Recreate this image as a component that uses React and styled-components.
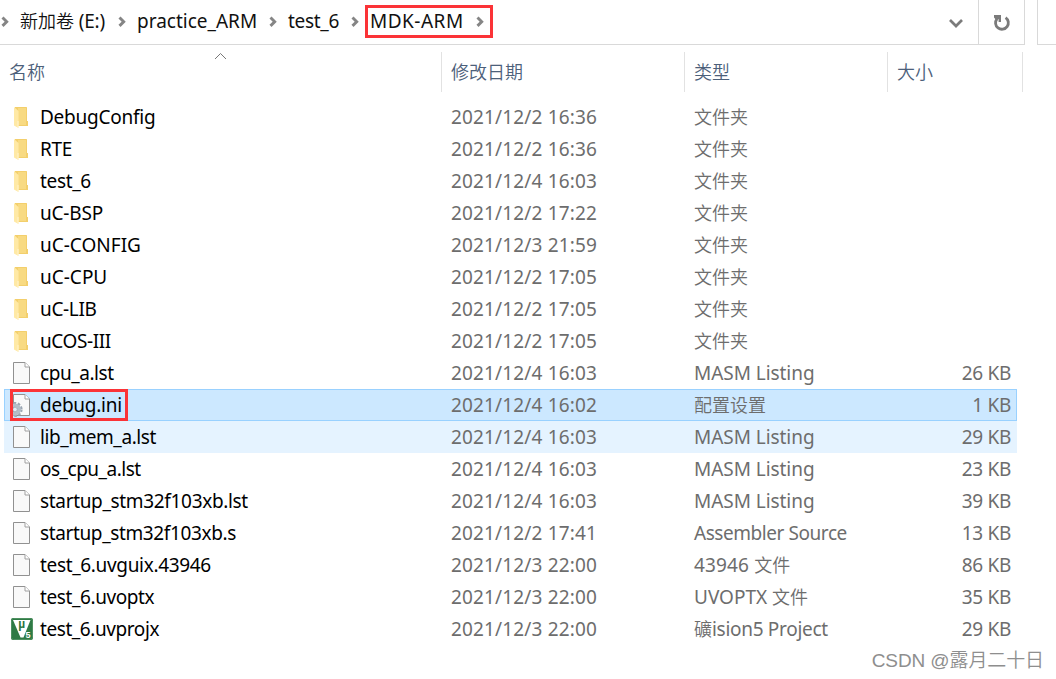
import styled, { createGlobalStyle } from "styled-components";

const GlobalStyle = createGlobalStyle`
  * {
    box-sizing: border-box;
  }
  body {
    margin: 0;
    background: #fff;
    font-family: "Noto Sans", "Noto Sans CJK SC", sans-serif;
    font-size: 19px;
    overflow: hidden;
  }
`;

const Window = styled.div`
  position: relative;
  width: 1056px;
  height: 679px;
  background: #fff;
  overflow: hidden;
`;

const AddressRow = styled.div`
  display: flex;
  justify-content: space-between;
  height: 45px;
`;

const AddressBar = styled.div`
  display: flex;
  width: 1025px;
  border-right: 1px solid #d9d9d9;
  border-bottom: 1px solid #d9d9d9;
`;

const SearchBox = styled.div`
  width: 19px;
  border-left: 1px solid #d9d9d9;
  border-bottom: 1px solid #d9d9d9;
`;

const Crumbs = styled.div`
  display: flex;
  flex: 1;
  height: 42px;
  align-items: center;
`;

const Crumb = styled.div`
  display: flex;
  align-items: center;
  height: 33px;
  flex: none;
  width: ${(props) => props.$width}px;
  padding-left: ${(props) => props.$pad}px;
  color: #111;
`;

const MarkedCrumb = styled(Crumb)`
  margin-left: 5px;
  padding-right: 5px;
  border: 3px solid #fb3337;
`;

const CrumbLabel = styled.span`
  flex: 1;
  line-height: 26px;
  white-space: nowrap;
`;

const Text = styled.span`
  white-space: pre;
  letter-spacing: ${(props) => props.$track || 0}px;
`;

const Cjk = styled.span`
  font-family: "Noto Sans CJK SC", sans-serif;
  font-size: 18px;
  font-weight: 350;
  line-height: 1;
  letter-spacing: 0;
`;

const DropButton = styled.div`
  display: flex;
  align-items: center;
  justify-content: center;
  width: 44px;
  height: 46px;
`;

const RefreshButton = styled(DropButton)`
  width: 46px;
  height: 44px;
  padding-top: 2px;
  border-left: 1px solid #d9d9d9;
`;

const Columns = styled.div`
  position: relative;
  display: flex;
  height: 40px;
  margin-top: 7px;
`;

const Column = styled.div`
  width: ${(props) => props.$width}px;
  padding-left: 9px;
  border-right: 1px solid #e2e2e2;
  line-height: 40px;
  color: #4c607a;
`;

const SortArrow = styled.svg`
  position: absolute;
  left: 214px;
  top: 0;
`;

const List = styled.div`
  margin: 9px 39px 0 4px;
`;

const Row = styled.div`
  display: flex;
  align-items: center;
  height: 32px;
  padding-left: 6px;
  color: #6d6d6d;
  background: ${(props) =>
    props.$state === "selected"
      ? "#cce8ff"
      : props.$state === "hover"
        ? "#e5f3ff"
        : "transparent"};
  box-shadow: ${(props) =>
    props.$state === "selected" ? "inset 0 0 0 1px #99d1ff, 0 1px 0 #99d1ff" : "none"};
`;

const NameCell = styled.div`
  display: flex;
  align-items: center;
  width: 441px;
  color: #000;
`;

const NameBox = styled.div`
  display: flex;
  align-items: center;
  height: 32px;
`;

const MarkedBox = styled(NameBox)`
  width: 118px;
  height: 32px;
  box-shadow: inset 0 0 0 3px #fb3337;
`;

const IconSlot = styled.div`
  display: flex;
  width: 30px;
  height: 24px;
  flex: none;
`;

const Label = styled.div`
  line-height: 30px;
  white-space: nowrap;
`;

const DateCell = styled(Label)`
  width: 243px;
`;

const TypeCell = styled(Label)`
  width: 217px;
`;

const SizeCell = styled(Label)`
  width: 100px;
  text-align: right;
`;

const Watermark = styled.div`
  position: absolute;
  right: 12px;
  bottom: 3px;
  color: #8e8e8e;
  font-size: 19px;
  line-height: 30px;
  letter-spacing: -0.1px;
  font-family: "Liberation Sans", "Noto Sans CJK SC", sans-serif;
  font-weight: 350;
  white-space: nowrap;
`;

const Chevron = () => (
  <svg width="10" height="14" viewBox="0 0 10 14">
    <path d="M2.5 3.5L6.7 7.7L2.5 11.9" fill="none" stroke="#858585" strokeWidth="2.9" />
  </svg>
);

const FolderIcon = () => (
  <svg width="24" height="24" viewBox="0 0 24 24">
    <path d="M5 2H16.5L17 2.5V16H18V21H5Z" fill="#f3cf6c" />
    <path d="M8 3H16V20H8Z" fill="#f8da82" />
    <path d="M4 2L8.5 6V23L4 20.5Z" fill="#ffe9a5" />
    <path d="M8.5 16V23L7.5 22.5V16Z" fill="#fff4ce" />
  </svg>
);

const PagePath = () => (
  <>
    <path d="M3.5 1.5H15L19.5 6V22.5H3.5Z" fill="#f9f9f9" stroke="#919191" />
    <path d="M15 1.5V6H19.5" fill="#fff" stroke="#a0a0a0" />
  </>
);

const FileIcon = () => (
  <svg width="24" height="24" viewBox="0 0 24 24">
    <PagePath />
  </svg>
);

const ConfigIcon = () => (
  <svg width="24" height="24" viewBox="0 0 24 24">
    <clipPath id="gear-area">
      <rect x="3" y="0" width="21" height="24" />
    </clipPath>
    <PagePath />
    <g clipPath="url(#gear-area)">
      <circle cx="5" cy="16.5" r="6.3" fill="none" stroke="#9ca7b3" strokeWidth="2.6" strokeDasharray="2.4 1.56" />
      <circle cx="5" cy="16.5" r="4.2" fill="none" stroke="#b4bec9" strokeWidth="3.6" />
      <circle cx="5" cy="16.5" r="2.3" fill="#e4edf6" stroke="#8d98a5" strokeWidth="0.7" />
    </g>
  </svg>
);

const KeilIcon = () => (
  <svg width="24" height="24" viewBox="0 0 24 24">
    <rect x="1" y="1" width="22" height="22" rx="2" fill="#2f7a45" />
    <rect x="1.5" y="1.5" width="21" height="21" rx="2" fill="none" stroke="#4f9161" />
    <path d="M3 3H20.5L13.5 20.5H10.5Z" fill="#fff" />
    <text x="8.2" y="11" fontSize="12" fontWeight="700" fontFamily="Liberation Sans" fill="#2b7541">
      µ
    </text>
    <text x="15.5" y="20.5" fontSize="9" fontWeight="700" fontFamily="Liberation Sans" fill="#fff">
      5
    </text>
  </svg>
);

const icons = {
  folder: FolderIcon,
  file: FileIcon,
  config: ConfigIcon,
  keil: KeilIcon,
};

const files = [
  { name: "DebugConfig", track: -0.25, date: "2021/12/2 16:36", type: "文件夹", icon: "folder" },
  { name: "RTE", track: -0.3, date: "2021/12/2 16:36", type: "文件夹", icon: "folder" },
  { name: "test_6", track: -0.35, date: "2021/12/4 16:03", type: "文件夹", icon: "folder" },
  { name: "uC-BSP", track: -0.2, date: "2021/12/2 17:22", type: "文件夹", icon: "folder" },
  { name: "uC-CONFIG", date: "2021/12/3 21:59", type: "文件夹", icon: "folder" },
  { name: "uC-CPU", date: "2021/12/2 17:05", type: "文件夹", icon: "folder" },
  { name: "uC-LIB", track: -0.35, date: "2021/12/2 17:05", type: "文件夹", icon: "folder" },
  { name: "uCOS-III", track: -0.4, date: "2021/12/2 17:05", type: "文件夹", icon: "folder" },
  { name: "cpu_a.lst", track: -0.45, date: "2021/12/4 16:03", type: "MASM Listing", typeTrack: -0.05, size: "26 KB", icon: "file" },
  { name: "debug.ini", track: -0.25, date: "2021/12/4 16:02", type: "配置设置", size: "1 KB", icon: "config", state: "selected" },
  { name: "lib_mem_a.lst", track: -0.4, date: "2021/12/4 16:03", type: "MASM Listing", typeTrack: -0.05, size: "29 KB", icon: "file", state: "hover" },
  { name: "os_cpu_a.lst", track: -0.5, date: "2021/12/4 16:03", type: "MASM Listing", typeTrack: -0.05, size: "23 KB", icon: "file" },
  { name: "startup_stm32f103xb.lst", track: -0.33, date: "2021/12/4 16:03", type: "MASM Listing", typeTrack: -0.05, size: "39 KB", icon: "file" },
  { name: "startup_stm32f103xb.s", track: -0.37, date: "2021/12/2 17:41", type: "Assembler Source", typeTrack: -0.44, size: "13 KB", icon: "file" },
  { name: "test_6.uvguix.43946", track: -0.33, date: "2021/12/3 22:00", type: "43946 文件", typeTrack: 0.15, size: "86 KB", icon: "file" },
  { name: "test_6.uvoptx", track: -0.4, date: "2021/12/3 22:00", type: "UVOPTX 文件", size: "35 KB", icon: "file" },
  { name: "test_6.uvprojx", track: -0.42, date: "2021/12/3 22:00", type: "礦ision5 Project", typeTrack: -0.3, size: "29 KB", icon: "keil" },
];

// Chinese runs are set one pixel smaller than the Latin ones
const Mixed = ({ children, track }) => (
  <Text $track={track}>
    {children.split(/([\u4e00-\u9fff]+)/).map((part, i) =>
      i % 2 ? <Cjk key={i}>{part}</Cjk> : part
    )}
  </Text>
);

const FileRow = ({ file }) => {
  const Icon = icons[file.icon];
  const Box = file.state === "selected" ? MarkedBox : NameBox;

  return (
    <Row $state={file.state}>
      <NameCell>
        <Box>
          <IconSlot>
            <Icon />
          </IconSlot>
          <Label>
            <Mixed track={file.track}>{file.name}</Mixed>
          </Label>
        </Box>
      </NameCell>
      <DateCell>
        <Mixed track={0.15}>{file.date}</Mixed>
      </DateCell>
      <TypeCell>
        <Mixed track={file.typeTrack}>{file.type}</Mixed>
      </TypeCell>
      <SizeCell>
        <Mixed track={-0.3}>{file.size || ""}</Mixed>
      </SizeCell>
    </Row>
  );
};

export default function App() {
  return (
    <>
      <GlobalStyle />
      <Window>
        <AddressRow>
          <AddressBar>
            <Crumbs>
              <Chevron />
              <Crumb $width={117} $pad={10}>
                <CrumbLabel>
                  <Mixed track={-0.2}>新加卷 (E:)</Mixed>
                </CrumbLabel>
                <Chevron />
              </Crumb>
              <Crumb $width={151} $pad={10}>
                <CrumbLabel>
                  <Mixed>practice_ARM</Mixed>
                </CrumbLabel>
                <Chevron />
              </Crumb>
              <Crumb $width={82} $pad={10}>
                <CrumbLabel>
                  <Mixed track={-0.3}>test_6</Mixed>
                </CrumbLabel>
                <Chevron />
              </Crumb>
              <MarkedCrumb $width={128} $pad={2}>
                <CrumbLabel>
                  <Mixed track={0.5}>MDK-ARM</Mixed>
                </CrumbLabel>
                <Chevron />
              </MarkedCrumb>
            </Crumbs>
            <DropButton>
              <svg width="16" height="12" viewBox="0 0 16 12">
                <path d="M2 3L8 9L14 3" fill="none" stroke="#7b7b7b" strokeWidth="2.7" />
              </svg>
            </DropButton>
            <RefreshButton>
              <svg width="20" height="20" viewBox="0 0 20 20">
                <path d="M13.6 4.6A6.4 6.4 0 1 1 5 5.8" fill="none" stroke="#7b7b7b" strokeWidth="2.8" />
                <path d="M2 2H9V9H6.6V6L4.5 7.5L2 4.4Z" fill="#7b7b7b" />
              </svg>
            </RefreshButton>
          </AddressBar>
          <SearchBox />
        </AddressRow>
        <Columns>
          <SortArrow width="13" height="9" viewBox="0 0 13 9">
            <path d="M1 7L6.5 1.5L12 7" fill="none" stroke="#777" strokeWidth="1" />
          </SortArrow>
          <Column $width={442}>
            <Mixed>名称</Mixed>
          </Column>
          <Column $width={243}>
            <Mixed>修改日期</Mixed>
          </Column>
          <Column $width={203}>
            <Mixed>类型</Mixed>
          </Column>
          <Column $width={135}>
            <Mixed>大小</Mixed>
          </Column>
        </Columns>
        <List>
          {files.map((file) => (
            <FileRow key={file.name} file={file} />
          ))}
        </List>
        <Watermark>CSDN @露月二十日</Watermark>
      </Window>
    </>
  );
}
